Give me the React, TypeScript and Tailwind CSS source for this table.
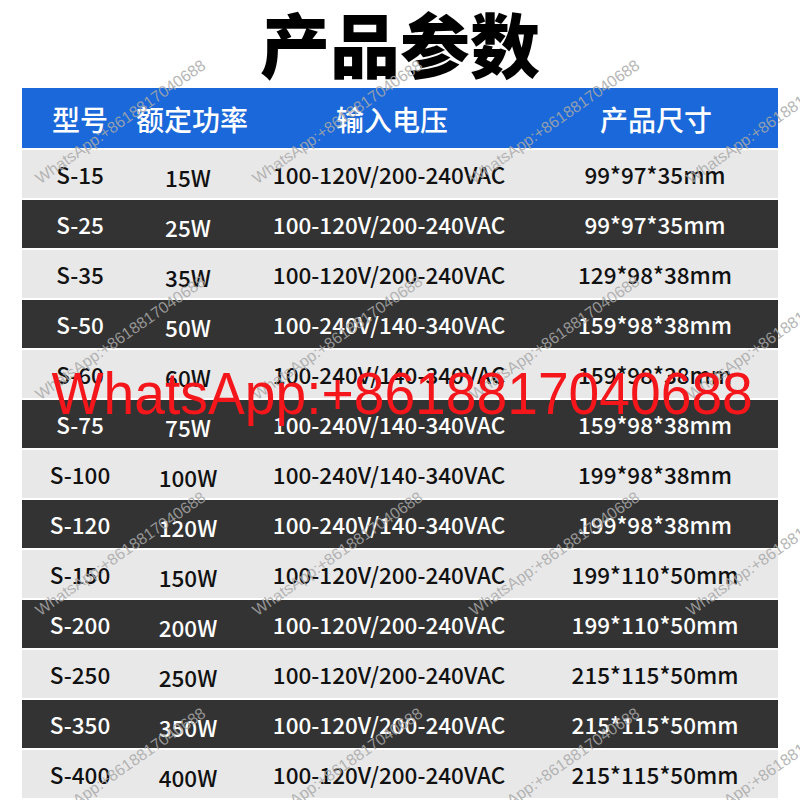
import React from "react";

type Row = { model: string; power: string; input: string; size: string };

const rows: Row[] = [
  { model: "S-15", power: "15W", input: "100-120V/200-240VAC", size: "99*97*35mm" },
  { model: "S-25", power: "25W", input: "100-120V/200-240VAC", size: "99*97*35mm" },
  { model: "S-35", power: "35W", input: "100-120V/200-240VAC", size: "129*98*38mm" },
  { model: "S-50", power: "50W", input: "100-240V/140-340VAC", size: "159*98*38mm" },
  { model: "S-60", power: "60W", input: "100-240V/140-340VAC", size: "159*98*38mm" },
  { model: "S-75", power: "75W", input: "100-240V/140-340VAC", size: "159*98*38mm" },
  { model: "S-100", power: "100W", input: "100-240V/140-340VAC", size: "199*98*38mm" },
  { model: "S-120", power: "120W", input: "100-240V/140-340VAC", size: "199*98*38mm" },
  { model: "S-150", power: "150W", input: "100-120V/200-240VAC", size: "199*110*50mm" },
  { model: "S-200", power: "200W", input: "100-120V/200-240VAC", size: "199*110*50mm" },
  { model: "S-250", power: "250W", input: "100-120V/200-240VAC", size: "215*115*50mm" },
  { model: "S-350", power: "350W", input: "100-120V/200-240VAC", size: "215*115*50mm" },
  { model: "S-400", power: "400W", input: "100-120V/200-240VAC", size: "215*115*50mm" },
];

const CJK = "font-['Noto_Sans_CJK_SC','Noto_Sans',sans-serif]";
const WATERMARK = "WhatsApp:+8618817040688";

function Cell({ children, className = "" }: { children: React.ReactNode; className?: string }) {
  return <div className={`flex items-center justify-center whitespace-nowrap ${className}`}>{children}</div>;
}

export default function App() {
  return (
    <div className={`relative h-[800px] w-[800px] overflow-hidden bg-white ${CJK}`}>
      {/* title */}
      <div className="flex h-[88px] items-center justify-center pb-[2px]">
        <h1 className="text-[70px] font-black leading-none text-black">产品参数</h1>
      </div>

      {/* table */}
      <div className="mx-[22px] flex flex-col">
        <div className="grid h-[60px] grid-cols-[116px_108px_292px_236px_1fr] bg-[#1a68d9] text-[28px] font-medium leading-none text-white">
          <Cell className="pt-[2px]">型号</Cell>
          <Cell className="pt-[2px]">额定功率</Cell>
          <Cell className="pt-[2px]">输入电压</Cell>
          <Cell className="pt-[2px]">产品尺寸</Cell>
          <div />
        </div>
        {rows.map((r, i) => (
          <div
            key={r.model}
            className={`mt-[2px] grid h-[48px] grid-cols-[116px_100px_302px_230px_1fr] text-[22.5px] font-medium leading-none ${
              i % 2 === 0 ? "bg-[#e8e8e8] text-[#111]" : "bg-[#333333] text-white"
            }`}
          >
            <Cell>{r.model}</Cell>
            <Cell className="pt-[7px]">{r.power}</Cell>
            <Cell>{r.input}</Cell>
            <Cell>{r.size}</Cell>
            <div />
          </div>
        ))}
      </div>

      {/* faint diagonal watermarks */}
      <div className="pointer-events-none absolute left-[12px] top-[14px] grid grid-cols-[repeat(4,217px)] grid-rows-[repeat(4,216px)]">
        {Array.from({ length: 16 }).map((_, i) => (
          <div key={i} className="flex items-center justify-center">
            <span className="-rotate-[35deg] whitespace-nowrap font-['Liberation_Sans',sans-serif] text-[16px] leading-none text-[rgba(168,168,168,0.85)]">
              {WATERMARK}
            </span>
          </div>
        ))}
      </div>

      {/* big red watermark */}
      <div className="pointer-events-none absolute left-0 right-0 top-[364px] flex justify-center pl-[4px]">
        <span className="scale-x-[0.92] whitespace-nowrap font-['Liberation_Sans',sans-serif] text-[60px] leading-none text-[#f5161b]">
          {WATERMARK}
        </span>
      </div>
    </div>
  );
}
